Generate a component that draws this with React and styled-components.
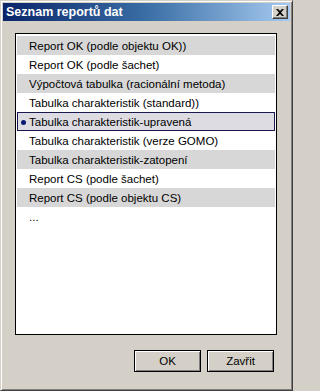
import React, { useState } from "react";
import styled, { createGlobalStyle } from "styled-components";

const GlobalStyle = createGlobalStyle`
  html, body {
    margin: 0;
    padding: 0;
    background: #d4d0c8;
  }
  * {
    box-sizing: border-box;
  }
`;

const Window = styled.div`
  width: 293px;
  height: 391px;
  background: #d4d0c8;
  border: 1px solid;
  border-color: #d4d0c8 #404040 #404040 #d4d0c8;
  box-shadow: inset 1px 1px #ffffff, inset -1px -1px #808080;
  padding: 2px;
  display: flex;
  flex-direction: column;
  font-family: "Liberation Sans", Arial, sans-serif;
`;

const TitleBar = styled.div`
  height: 18px;
  flex: none;
  display: flex;
  align-items: center;
  justify-content: space-between;
  padding: 0 2px 0 3px;
  background: linear-gradient(90deg, #0a246a 0%, #3a6ea5 50%, #a6caf0 100%);
`;

const Title = styled.span`
  color: #ffffff;
  font-family: "Liberation Sans", Arial, sans-serif;
  font-weight: bold;
  font-size: 12.5px;
`;

const CloseButton = styled.button`
  width: 16px;
  height: 14px;
  padding: 0;
  margin: 0;
  background: #d4d0c8;
  border: 1px solid;
  border-color: #ffffff #404040 #404040 #ffffff;
  box-shadow: inset -1px -1px #808080;
  display: flex;
  align-items: center;
  justify-content: center;
`;

const Body = styled.div`
  flex: 1;
  display: flex;
  flex-direction: column;
  padding: 12px 13px 16px 12px;
`;

const ListBox = styled.div`
  height: 302px;
  background: #ffffff;
  border: 1px solid #000000;
  padding: 2px 1px;
  display: flex;
  flex-direction: column;
`;

const Row = styled.div`
  height: 19px;
  flex: none;
  display: flex;
  align-items: center;
  position: relative;
  padding-left: 11px;
  font-size: 11.5px;
  color: #000000;
  white-space: nowrap;
  background: ${(p) =>
    p.$selected ? "#dcdce2" : p.$shaded ? "#d7d7d7" : "#ffffff"};
  border: 1px solid ${(p) => (p.$selected ? "#1a1a50" : "transparent")};
`;

const Bullet = styled.span`
  position: absolute;
  left: 3px;
  top: 50%;
  width: 5px;
  height: 5px;
  margin-top: -2px;
  border-radius: 50%;
  background: #0a1a70;
`;

const ButtonRow = styled.div`
  display: flex;
  justify-content: flex-end;
  gap: 6px;
  margin-top: 15px;
  padding-right: 3px;
`;

const DialogButton = styled.button`
  width: ${(p) => p.$width}px;
  height: 22px;
  background: #d4d0c8;
  border: 1px solid #000000;
  box-shadow: inset 1px 1px #ffffff, inset -1px -1px #808080;
  font-family: "Liberation Sans", Arial, sans-serif;
  font-size: 11.5px;
  color: #000000;
  padding: 0;
`;

const reports = [
  "Report OK (podle objektu OK))",
  "Report OK (podle šachet)",
  "Výpočtová tabulka (racionální metoda)",
  "Tabulka charakteristik (standard))",
  "Tabulka charakteristik-upravená",
  "Tabulka charakteristik (verze GOMO)",
  "Tabulka charakteristik-zatopení",
  "Report CS (podle šachet)",
  "Report CS (podle objektu CS)",
  "...",
];

const shadedRows = [0, 2, 6, 8];

export default function App() {
  const [selected, setSelected] = useState(4);

  return (
    <>
      <GlobalStyle />
      <Window>
        <TitleBar>
          <Title>Seznam reportů dat</Title>
          <CloseButton aria-label="Zavřít">
            <svg width="8" height="7" viewBox="0 0 8 7">
              <path
                d="M0 0h2l2 2 2-2h2L5 3.5 8 7H6L4 5 2 7H0l3-3.5z"
                fill="#000"
              />
            </svg>
          </CloseButton>
        </TitleBar>
        <Body>
          <ListBox>
            {reports.map((name, i) => (
              <Row
                key={name}
                $shaded={shadedRows.includes(i)}
                $selected={i === selected}
                onClick={() => setSelected(i)}
              >
                {i === selected && <Bullet />}
                {name}
              </Row>
            ))}
          </ListBox>
          <ButtonRow>
            <DialogButton $width={67}>OK</DialogButton>
            <DialogButton $width={67}>Zavřit</DialogButton>
          </ButtonRow>
        </Body>
      </Window>
    </>
  );
}
